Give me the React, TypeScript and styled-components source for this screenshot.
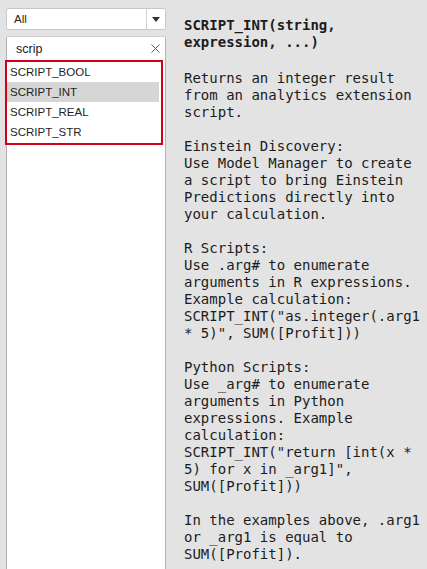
import React, { useState } from "react";
import styled, { createGlobalStyle } from "styled-components";

const GlobalStyle = createGlobalStyle`
  html, body {
    margin: 0;
    padding: 0;
    background: #e3e3e3;
  }
  #root {
    height: 100vh;
  }
`;

const functions = ["SCRIPT_BOOL", "SCRIPT_INT", "SCRIPT_REAL", "SCRIPT_STR"];

const paragraphs = [
  "Returns an integer result\nfrom an analytics extension\nscript.",
  "Einstein Discovery:\nUse Model Manager to create\na script to bring Einstein\nPredictions directly into\nyour calculation.",
  'R Scripts:\nUse .arg# to enumerate\narguments in R expressions.\nExample calculation:\nSCRIPT_INT("as.integer(.arg1\n* 5)", SUM([Profit]))',
  'Python Scripts:\nUse _arg# to enumerate\narguments in Python\nexpressions. Example\ncalculation:\nSCRIPT_INT("return [int(x *\n5) for x in _arg1]",\nSUM([Profit]))',
  "In the examples above, .arg1\nor _arg1 is equal to\nSUM([Profit]).",
];

const App: React.FC = () => {
  const [search, setSearch] = useState("scrip");
  const [selected, setSelected] = useState("SCRIPT_INT");

  const matches = functions.filter((f) =>
    f.toLowerCase().includes(search.toLowerCase())
  );

  return (
    <Container>
      <GlobalStyle />
      <Sidebar>
        <Select>
          <SelectValue>All</SelectValue>
          <SelectArrow>
            <svg width="8" height="5" viewBox="0 0 8 5">
              <path d="M0 0 L8 0 L4 5 Z" fill="#333" />
            </svg>
          </SelectArrow>
        </Select>
        <ListPanel>
          <SearchRow>
            <SearchInput
              value={search}
              onChange={(e) => setSearch(e.target.value)}
            />
            <ClearButton onClick={() => setSearch("")}>
              <svg width="9" height="9" viewBox="0 0 9 9">
                <path
                  d="M0.5 0.5 L8.5 8.5 M8.5 0.5 L0.5 8.5"
                  stroke="#555"
                  strokeWidth="1"
                />
              </svg>
            </ClearButton>
          </SearchRow>
          <ResultList>
            {matches.map((name) => (
              <ResultItem
                key={name}
                $active={name === selected}
                onClick={() => setSelected(name)}
              >
                {name}
              </ResultItem>
            ))}
          </ResultList>
        </ListPanel>
      </Sidebar>
      <Details>
        <Signature>{"SCRIPT_INT(string,\nexpression, ...)"}</Signature>
        {paragraphs.map((p, i) => (
          <Paragraph key={i}>{p}</Paragraph>
        ))}
      </Details>
    </Container>
  );
};

const Container = styled.div`
  display: flex;
  height: 100vh;
  overflow: hidden;
  background: #e3e3e3;
`;

const Sidebar = styled.div`
  display: flex;
  flex-direction: column;
  gap: 6px;
  width: 160px;
  padding: 8px 0 0 6px;
  flex-shrink: 0;
`;

const Select = styled.div`
  display: flex;
  height: 22px;
  box-sizing: border-box;
  background: #fff;
  border: 1px solid #c8c8c8;
  border-radius: 2px;
`;

const SelectValue = styled.div`
  flex: 1;
  padding-left: 7px;
  font-family: "Liberation Sans", Arial, sans-serif;
  font-size: 11.5px;
  line-height: 20px;
  color: #222;
`;

const SelectArrow = styled.div`
  width: 18px;
  display: flex;
  align-items: center;
  justify-content: center;
  border-left: 1px solid #d0d0d0;
`;

const ListPanel = styled.div`
  flex: 1;
  margin-bottom: -4px;
  background: #fff;
  border: 1px solid #b4b4b4;
  border-top-color: #cfcfcf;
  border-radius: 2px 2px 0 0;
  display: flex;
  flex-direction: column;
`;

const SearchRow = styled.div`
  display: flex;
  align-items: center;
  height: 23px;
  padding: 0 5px 0 9px;
`;

const SearchInput = styled.input`
  flex: 1;
  min-width: 0;
  border: none;
  outline: none;
  padding: 0;
  background: transparent;
  font-family: "Liberation Sans", Arial, sans-serif;
  font-size: 12.5px;
  color: #222;
`;

const ClearButton = styled.button`
  border: none;
  background: none;
  padding: 0;
  width: 9px;
  height: 9px;
  display: flex;
  cursor: pointer;
`;

const ResultList = styled.div`
  display: flex;
  flex-direction: column;
  margin: 0 2px 0 -2px;
  padding-bottom: 1px;
  border: 2px solid #d0021b;
`;

const ResultItem = styled.div<{ $active: boolean }>`
  height: 20px;
  margin-right: 2px;
  padding-left: 3px;
  font-family: "Liberation Sans", Arial, sans-serif;
  font-size: 11.5px;
  line-height: 20px;
  color: #1e1e1e;
  background: ${(p) => (p.$active ? "#d6d6d6" : "transparent")};
  cursor: default;
`;

const Details = styled.div`
  flex: 1;
  padding: 17px 0 0 18px;
  font-family: "DejaVu Sans Mono", Menlo, monospace;
  font-size: 14px;
  line-height: 17px;
  color: #1c1c1c;
`;

const Signature = styled.div`
  font-weight: bold;
  white-space: pre;
  margin-bottom: 19px;
`;

const Paragraph = styled.div`
  white-space: pre;
  & + & {
    margin-top: 17px;
  }
`;

export default App;
